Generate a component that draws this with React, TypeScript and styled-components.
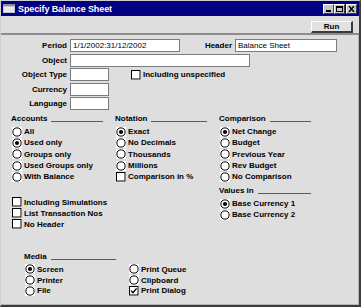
import React from "react";
import styled, { createGlobalStyle } from "styled-components";

const GlobalStyle = createGlobalStyle`
  html, body {
    margin: 0;
    padding: 0;
    background: #dedede;
  }
  body {
    font-family: "Liberation Sans", Arial, sans-serif;
  }
`;

const Window = styled.div`
  width: 361px;
  height: 307px;
  box-sizing: border-box;
  display: flex;
  flex-direction: column;
  background: #dedede;
  border-top: 1px solid #cfcfcf;
  border-left: 1px solid #cfcfcf;
  border-right: 2px solid #3c3c3c;
  border-bottom: 2px solid #3c3c3c;
  overflow: hidden;
`;

const TitleBar = styled.div`
  height: 15px;
  flex: none;
  display: flex;
  align-items: center;
  background: #000080;
  padding: 0 2px;
`;

const TitleText = styled.span`
  margin-left: 3px;
  color: #ffffff;
  font-size: 9px;
  font-weight: 700;
  letter-spacing: -0.1px;
`;

const TitleButtons = styled.div`
  margin-left: auto;
  display: flex;
`;

const TitleButton = styled.div<{ $gap?: boolean }>`
  width: 11px;
  height: 10px;
  box-sizing: border-box;
  margin-left: ${(p) => (p.$gap ? "1px" : "0")};
  background: #c6c6c6;
  border: 1px solid;
  border-color: #ffffff #404040 #404040 #ffffff;
  display: flex;
  align-items: center;
  justify-content: center;
`;

const Toolbar = styled.div`
  height: 19px;
  flex: none;
  display: flex;
  justify-content: flex-end;
  align-items: flex-start;
  padding: 5px 6px 0 0;
  box-sizing: border-box;
  border-bottom: 2px solid #8c8c8c;
`;

const RunButton = styled.button`
  width: 42px;
  height: 12px;
  box-sizing: border-box;
  padding: 0;
  background: #e2e2e2;
  border-style: solid;
  border-width: 1px 2px 2px 1px;
  border-color: #ffffff #3a3a3a #3a3a3a #ffffff;
  font-family: "Liberation Sans", Arial, sans-serif;
  font-size: 8px;
  font-weight: 700;
  line-height: 9px;
  color: #000;
`;

const Body = styled.div`
  flex: 1;
  padding-top: 4px;
  box-sizing: border-box;
  border-right: 1px solid #b4b4b4;
  border-bottom: 1px solid #b4b4b4;
`;

const FieldRow = styled.div`
  display: flex;
  align-items: center;
  height: 13px;
  margin-bottom: 1.5px;
`;

const Label = styled.span<{ $w: number }>`
  width: ${(p) => p.$w}px;
  box-sizing: border-box;
  padding-right: 3px;
  text-align: right;
  font-size: 8px;
  font-weight: 700;
  color: #000;
  white-space: nowrap;
`;

const Input = styled.div<{ $w: number }>`
  width: ${(p) => p.$w}px;
  height: 13px;
  box-sizing: border-box;
  background: #ffffff;
  border: 1px solid #7c7c7c;
  padding: 0 2px;
  font-size: 8px;
  line-height: 11px;
  color: #000;
  white-space: nowrap;
  overflow: hidden;
`;

const Columns = styled.div`
  display: grid;
  grid-template-columns: 104px 104px 104px;
  padding-left: 10px;
  margin-top: 4px;
  align-items: start;
`;

const Column = styled.div`
  display: flex;
  flex-direction: column;
`;

const Heading = styled.div<{ $top?: number }>`
  display: flex;
  align-items: flex-end;
  width: 92px;
  height: 10px;
  margin-top: ${(p) => p.$top ?? 0}px;
  margin-bottom: 2px;
  font-size: 8px;
  font-weight: 700;
  line-height: 10px;
  color: #000;
  white-space: nowrap;
`;

const HeadingLine = styled.span`
  flex: 1;
  height: 1px;
  margin: 0 0 2px 4px;
  background: #5a5a5a;
`;

const Group = styled.div<{ $top?: number }>`
  display: flex;
  flex-direction: column;
  margin-top: ${(p) => p.$top ?? 0}px;
`;

const Option = styled.div<{ $h: number }>`
  display: flex;
  align-items: center;
  height: ${(p) => p.$h}px;
  font-size: 8px;
  font-weight: 700;
  color: #000;
  white-space: nowrap;
`;

const Glyph = styled.span`
  width: 10px;
  height: 10px;
  margin-left: 1px;
  margin-right: 2px;
  background: #ffffff;
  display: flex;
`;

const Media = styled.div`
  margin-top: 22px;
  padding-left: 23px;
`;

const MediaGrid = styled.div`
  display: grid;
  grid-template-columns: 104px 104px;
`;

const CheckInline = styled.div`
  margin-left: 21px;
`;

const Radio = ({ on }: { on?: boolean }) => (
  <Glyph>
    <svg width="10" height="10" viewBox="0 0 10 10">
      <circle cx="5" cy="5" r="4.1" fill="#fff" stroke="#000" strokeWidth="1" />
      {on && <circle cx="5" cy="5" r="2.1" fill="#000" />}
    </svg>
  </Glyph>
);

const Check = ({ on }: { on?: boolean }) => (
  <Glyph>
    <svg width="10" height="10" viewBox="0 0 10 10">
      <rect x="0.5" y="0.5" width="8.5" height="8.5" fill="#fff" stroke="#000" strokeWidth="1" />
      {on && <path d="M2 4.6 L4 6.8 L7.6 2.4" fill="none" stroke="#000" strokeWidth="1.4" />}
    </svg>
  </Glyph>
);

type Item = { label: string; on?: boolean; check?: boolean };

const Options = ({ items, h }: { items: Item[]; h: number }) => (
  <>
    {items.map((it) => (
      <Option key={it.label} $h={h}>
        {it.check ? <Check on={it.on} /> : <Radio on={it.on} />}
        {it.label}
      </Option>
    ))}
  </>
);

const Section = ({ title, top }: { title: string; top?: number }) => (
  <Heading $top={top}>
    {title}
    <HeadingLine />
  </Heading>
);

const WindowIcon = () => (
  <svg width="12" height="9" viewBox="0 0 12 9">
    <rect x="0" y="0" width="12" height="9" fill="#c8c8d0" />
    <rect x="0" y="0" width="12" height="2" fill="#8c8c9c" />
    <rect x="1" y="3" width="10" height="5" fill="#e8e8ee" />
  </svg>
);

const App = () => {
  return (
    <>
      <GlobalStyle />
      <Window>
        <TitleBar>
          <WindowIcon />
          <TitleText>Specify Balance Sheet</TitleText>
          <TitleButtons>
            <TitleButton>
              <svg width="7" height="6" viewBox="0 0 7 6">
                <rect x="1" y="4" width="5" height="2" fill="#000" />
              </svg>
            </TitleButton>
            <TitleButton>
              <svg width="7" height="6" viewBox="0 0 7 6">
                <rect x="0.5" y="0.5" width="6" height="5" fill="none" stroke="#000" />
                <rect x="0" y="0" width="7" height="2" fill="#000" />
              </svg>
            </TitleButton>
            <TitleButton $gap>
              <svg width="7" height="6" viewBox="0 0 7 6">
                <path d="M1 0 L6 6 M6 0 L1 6" stroke="#000" strokeWidth="1.4" />
              </svg>
            </TitleButton>
          </TitleButtons>
        </TitleBar>

        <Toolbar>
          <RunButton>Run</RunButton>
        </Toolbar>

        <Body>
          <FieldRow>
            <Label $w={69}>Period</Label>
            <Input $w={110}>1/1/2002:31/12/2002</Input>
            <Label $w={55}>Header</Label>
            <Input $w={102}>Balance Sheet</Input>
          </FieldRow>
          <FieldRow>
            <Label $w={69}>Object</Label>
            <Input $w={180} />
          </FieldRow>
          <FieldRow>
            <Label $w={69}>Object Type</Label>
            <Input $w={39} />
            <CheckInline>
              <Options h={13} items={[{ label: "Including unspecified", check: true }]} />
            </CheckInline>
          </FieldRow>
          <FieldRow>
            <Label $w={69}>Currency</Label>
            <Input $w={39} />
          </FieldRow>
          <FieldRow>
            <Label $w={69}>Language</Label>
            <Input $w={39} />
          </FieldRow>

          <Columns>
            <Column>
              <Section title="Accounts" />
              <Options
                h={11.3}
                items={[
                  { label: "All" },
                  { label: "Used only", on: true },
                  { label: "Groups only" },
                  { label: "Used Groups only" },
                  { label: "With Balance" },
                ]}
              />
              <Group $top={14}>
                <Options
                  h={11.2}
                  items={[
                    { label: "Including Simulations", check: true },
                    { label: "List Transaction Nos", check: true },
                    { label: "No Header", check: true },
                  ]}
                />
              </Group>
            </Column>
            <Column>
              <Section title="Notation" />
              <Options
                h={11.3}
                items={[
                  { label: "Exact", on: true },
                  { label: "No Decimals" },
                  { label: "Thousands" },
                  { label: "Millions" },
                  { label: "Comparison in %", check: true },
                ]}
              />
            </Column>
            <Column>
              <Section title="Comparison" />
              <Options
                h={11.3}
                items={[
                  { label: "Net Change", on: true },
                  { label: "Budget" },
                  { label: "Previous Year" },
                  { label: "Rev Budget" },
                  { label: "No Comparison" },
                ]}
              />
              <Section title="Values in" top={3.5} />
              <Options
                h={11.3}
                items={[{ label: "Base Currency 1", on: true }, { label: "Base Currency 2" }]}
              />
            </Column>
          </Columns>

          <Media>
            <Section title="Media" />
            <MediaGrid>
              <Column>
                <Options
                  h={10.7}
                  items={[{ label: "Screen", on: true }, { label: "Printer" }, { label: "File" }]}
                />
              </Column>
              <Column>
                <Options
                  h={10.7}
                  items={[
                    { label: "Print Queue" },
                    { label: "Clipboard" },
                    { label: "Print Dialog", check: true, on: true },
                  ]}
                />
              </Column>
            </MediaGrid>
          </Media>
        </Body>
      </Window>
    </>
  );
};

export default App;
